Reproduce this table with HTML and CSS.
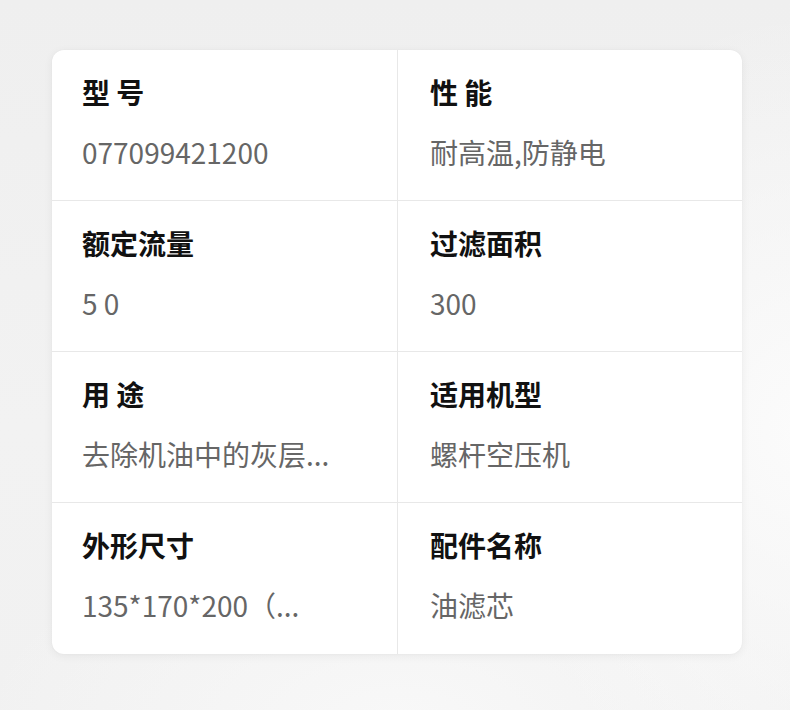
FILE: index.html
```html
<!DOCTYPE html>
<html lang="zh-CN">
<head>
<meta charset="utf-8">
<title>参数</title>
<link rel="stylesheet" href="styles.css">
</head>
<body>
<main class="page">
  <section class="card">
    <div class="cell">
      <div class="label">型 号</div>
      <div class="value">077099421200</div>
    </div>
    <div class="cell right">
      <div class="label">性 能</div>
      <div class="value">耐高温,防静电</div>
    </div>
    <div class="cell">
      <div class="label">额定流量</div>
      <div class="value">5 0</div>
    </div>
    <div class="cell right">
      <div class="label">过滤面积</div>
      <div class="value">300</div>
    </div>
    <div class="cell">
      <div class="label">用 途</div>
      <div class="value">去除机油中的灰层...</div>
    </div>
    <div class="cell right">
      <div class="label">适用机型</div>
      <div class="value">螺杆空压机</div>
    </div>
    <div class="cell last">
      <div class="label">外形尺寸</div>
      <div class="value">135*170*200（...</div>
    </div>
    <div class="cell right last">
      <div class="label">配件名称</div>
      <div class="value">油滤芯</div>
    </div>
  </section>
</main>
</body>
</html>
```
FILE: styles.css
```css
html, body {
  margin: 0;
  padding: 0;
}
body {
  width: 790px;
  height: 710px;
  overflow: hidden;
  background:
    radial-gradient(ellipse 300px 420px at 800px 430px, #fbfbfb 0%, rgba(251,251,251,0) 100%),
    radial-gradient(ellipse 420px 200px at 400px 720px, #f8f8f8 0%, rgba(248,248,248,0) 100%),
    linear-gradient(180deg, #efefef 0%, #f2f2f2 60%, #f1f1f1 100%);
  font-family: "Noto Sans CJK SC", "Noto Sans", sans-serif;
}
.page {
  padding: 50px 48px 56px 52px;
}
.card {
  width: 690px;
  background: #ffffff;
  border-radius: 12px;
  box-shadow: 0 2px 10px rgba(0, 0, 0, 0.06), 0 0 2px rgba(0, 0, 0, 0.04);
  display: grid;
  grid-template-columns: 345px 345px;
  overflow: hidden;
}
.cell {
  height: 151px;
  box-sizing: border-box;
  padding: 22px 20px 0 30px;
  border-bottom: 1px solid #e8e8e8;
}
.cell.right {
  border-left: 1px solid #e8e8e8;
  padding-left: 32px;
}
.cell.last {
  border-bottom: none;
  height: 151px;
}
.label {
  font-size: 28px;
  line-height: 40px;
  font-weight: 700;
  color: #111111;
}
.value {
  margin-top: 20px;
  font-size: 28px;
  line-height: 40px;
  font-weight: 400;
  color: #666666;
  white-space: nowrap;
}
```
